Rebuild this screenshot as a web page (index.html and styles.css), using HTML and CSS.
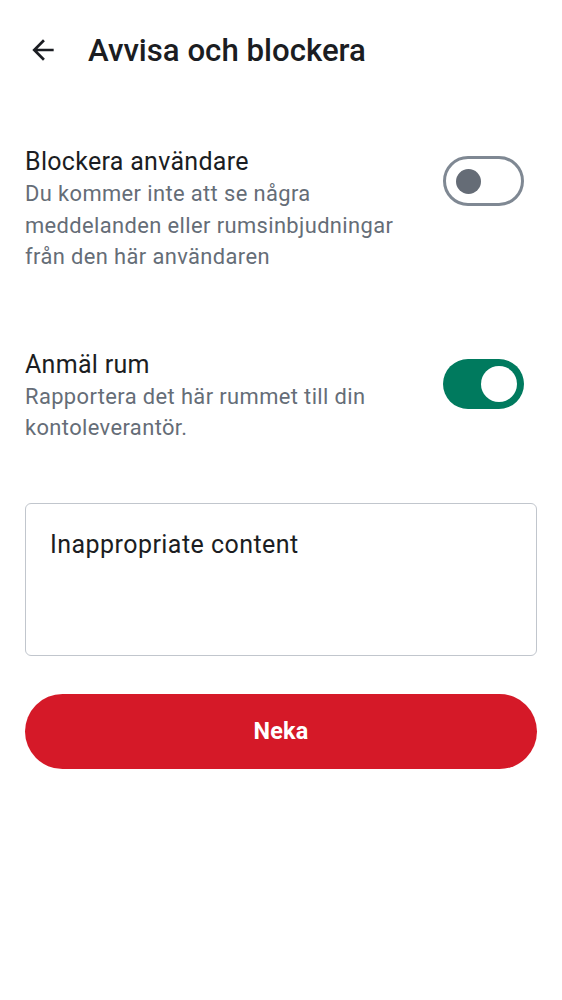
FILE: index.html
```html
<!DOCTYPE html>
<html>
<head>
<meta charset="utf-8">
<link rel="stylesheet" href="styles.css">
</head>
<body>
<div class="app">
  <header class="topbar">
    <svg class="back" viewBox="0 0 24 24" width="32" height="32"><path d="M20 11H7.83l5.59-5.59L12 4l-8 8 8 8 1.41-1.41L7.83 13H20v-2z" fill="#1b1d22"/></svg>
    <h1 class="title">Avvisa och blockera</h1>
  </header>
  <section class="row row-first">
    <div class="texts">
      <div class="label">Blockera användare</div>
      <div class="desc">Du kommer inte att se några meddelanden eller rumsinbjudningar från den här användaren</div>
    </div>
    <div class="switch off"><span class="knob"></span></div>
  </section>
  <section class="row row-second">
    <div class="texts">
      <div class="label">Anmäl rum</div>
      <div class="desc">Rapportera det här rummet till din kontoleverantör.</div>
    </div>
    <div class="switch on"><span class="knob"></span></div>
  </section>
  <div class="field">Inappropriate content</div>
  <button class="btn">Neka</button>
</div>
</body>
</html>
```
FILE: styles.css
```css
* { box-sizing: border-box; }
html, body { margin: 0; padding: 0; background: #fff; }
body { font-family: Roboto, "Noto Sans", sans-serif; color: #1b1d22; }
.app { padding: 0 25px; }
.topbar { display: flex; align-items: center; height: 100px; margin: 0 -25px; padding-left: 27px; }
.back { display: block; }
.title { margin: 0 0 0 29px; font-size: 31.2px; font-weight: 500; letter-spacing: 0; }
.row { display: flex; justify-content: space-between; align-items: flex-start; }
.row-first { margin-top: 46px; }
.row-second { margin-top: 76px; }
.texts { width: 385px; }
.label { font-size: 25px; line-height: 32px; letter-spacing: 0.3px; color: #1b1d22; }
.desc { font-size: 21.9px; line-height: 31.5px; letter-spacing: 0.39px; color: #656d77; }
.switch { width: 81px; height: 50px; border-radius: 25px; margin-top: 10px; display: flex; align-items: center; flex-shrink: 0; margin-right: 13px; }
.switch.off { border: 3px solid #7f8893; padding-left: 10px; }
.switch.off .knob { width: 25px; height: 25px; border-radius: 50%; background: #656c76; }
.switch.on { margin-top: 10px; background: #007a5e; justify-content: flex-end; padding-right: 7px; }
.switch.on .knob { width: 36px; height: 36px; border-radius: 50%; background: #fff; }
.field { margin-top: 59px; height: 153px; border: 1.5px solid #c1c6cd; border-radius: 6px; padding: 26px 24px; font-size: 25px; line-height: 30px; letter-spacing: 0.45px; color: #1b1d22; }
.btn { display: block; width: 100%; margin-top: 38px; height: 75px; border: 0; border-radius: 38px; background: #d51928; color: #fff; font-family: Roboto, sans-serif; font-size: 23.4px; font-weight: 700; letter-spacing: 0.2px; }
```
